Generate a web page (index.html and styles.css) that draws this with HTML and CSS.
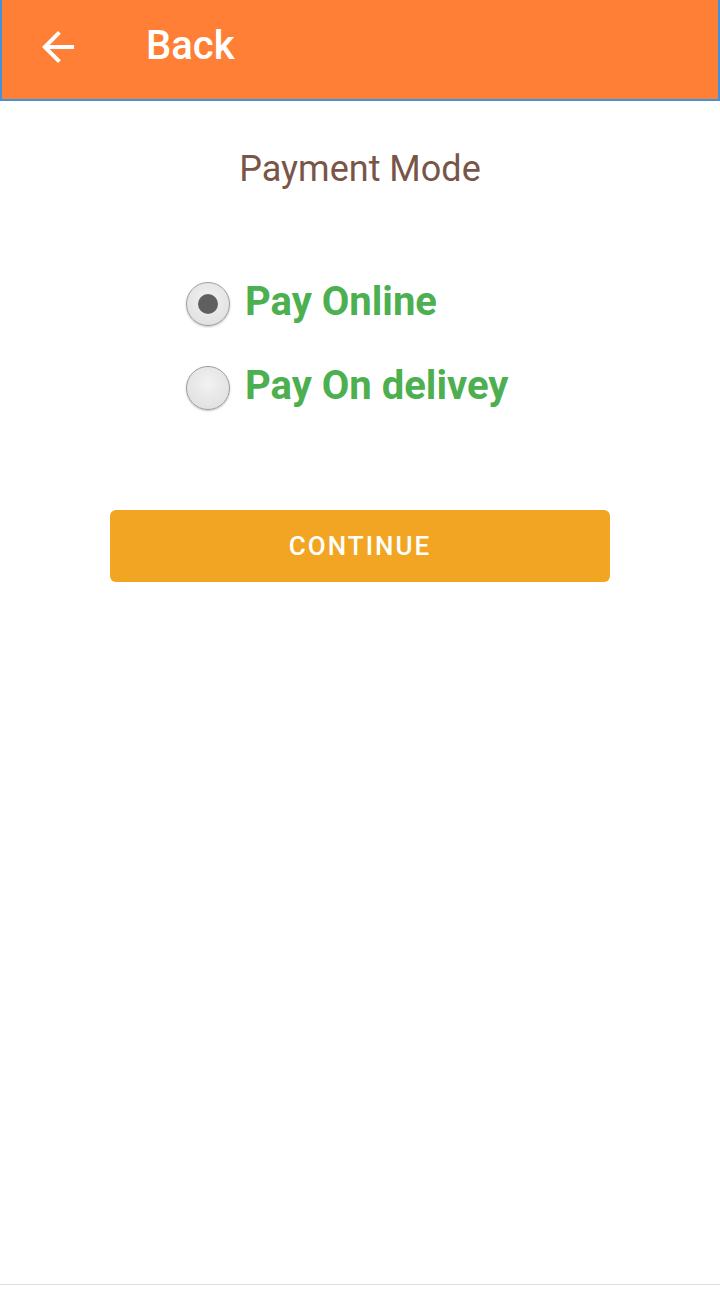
FILE: index.html
```html
<!DOCTYPE html>
<html lang="en">
<head>
    <meta charset="UTF-8">
    <meta name="viewport" content="width=device-width, initial-scale=1.0">
    <title>Payment Mode</title>
    <link rel="stylesheet" href="styles.css">
</head>
<body>
    <div class="topbar">
        <button class="back-btn" aria-label="Back">
            <svg width="48" height="48" viewBox="0 0 24 24">
                <path d="M20 11H7.83l5.59-5.59L12 4l-8 8 8 8 1.41-1.41L7.83 13H20v-2z" fill="#fff"/>
            </svg>
        </button>
        <span class="topbar-title">Back</span>
    </div>

    <div class="content">
        <h2 class="page-title">Payment Mode</h2>

        <form class="pay-form">
            <label class="pay-option">
                <input type="radio" name="mode" value="online" checked>
                <span class="radio-dot"></span>
                <span class="pay-label">Pay Online</span>
            </label>
            <label class="pay-option">
                <input type="radio" name="mode" value="delivery">
                <span class="radio-dot"></span>
                <span class="pay-label">Pay On delivey</span>
            </label>
        </form>

        <button class="continue-btn">CONTINUE</button>
    </div>

    <div class="bottom-line"></div>
</body>
</html>
```

FILE: styles.css
```css
body {
    margin: 0;
    background-color: white;
    font-family: Roboto, "Liberation Sans", Arial, sans-serif;
    height: 1290px;
    display: flex;
    flex-direction: column;
}
.topbar {
    height: 99px;
    background-color: #FF7F36;
    border: 2px solid #3D94DA;
    border-top: none;
    display: flex;
    align-items: center;
    padding-left: 32px;
}
.back-btn {
    background: none;
    border: none;
    padding: 0;
    width: 48px;
    height: 48px;
    display: flex;
    align-items: center;
    justify-content: center;
    margin-bottom: 6px;
}
.topbar-title {
    color: white;
    font-size: 40px;
    font-weight: 500;
    margin-left: 64px;
    margin-bottom: 8px;
}
.content {
    flex: 1;
    display: flex;
    flex-direction: column;
    align-items: center;
}
.page-title {
    margin: 47px 0 0 0;
    font-size: 36px;
    font-weight: 400;
    color: #795548;
}
.pay-form {
    margin-top: 90px;
    display: flex;
    flex-direction: column;
    gap: 36px;
    align-self: flex-start;
    margin-left: 186px;
}
.pay-option {
    display: flex;
    align-items: center;
    cursor: pointer;
    height: 48px;
}
.pay-option input {
    display: none;
}
.radio-dot {
    width: 42px;
    height: 42px;
    border-radius: 50%;
    border: 1px solid #9e9e9e;
    background: radial-gradient(circle at 50% 40%, #f2f2f2 0%, #dcdcdc 100%);
    box-shadow: 0 1px 2px rgba(0, 0, 0, 0.25);
    display: flex;
    align-items: center;
    justify-content: center;
}
.pay-option input:checked + .radio-dot::after {
    content: "";
    width: 20px;
    height: 20px;
    border-radius: 50%;
    background-color: #5f5f5f;
}
.pay-label {
    margin-left: 15px;
    margin-bottom: 6px;
    font-size: 40px;
    font-weight: 700;
    color: #4CAF50;
}
.continue-btn {
    margin-top: 98px;
    width: 500px;
    height: 72px;
    background-color: #F2A522;
    color: white;
    border: none;
    border-radius: 6px;
    font-family: Roboto, "Liberation Sans", Arial, sans-serif;
    font-size: 26px;
    font-weight: 500;
    letter-spacing: 2px;
}
.bottom-line {
    height: 1px;
    background-color: #dddddd;
    margin-bottom: 5px;
}
```
